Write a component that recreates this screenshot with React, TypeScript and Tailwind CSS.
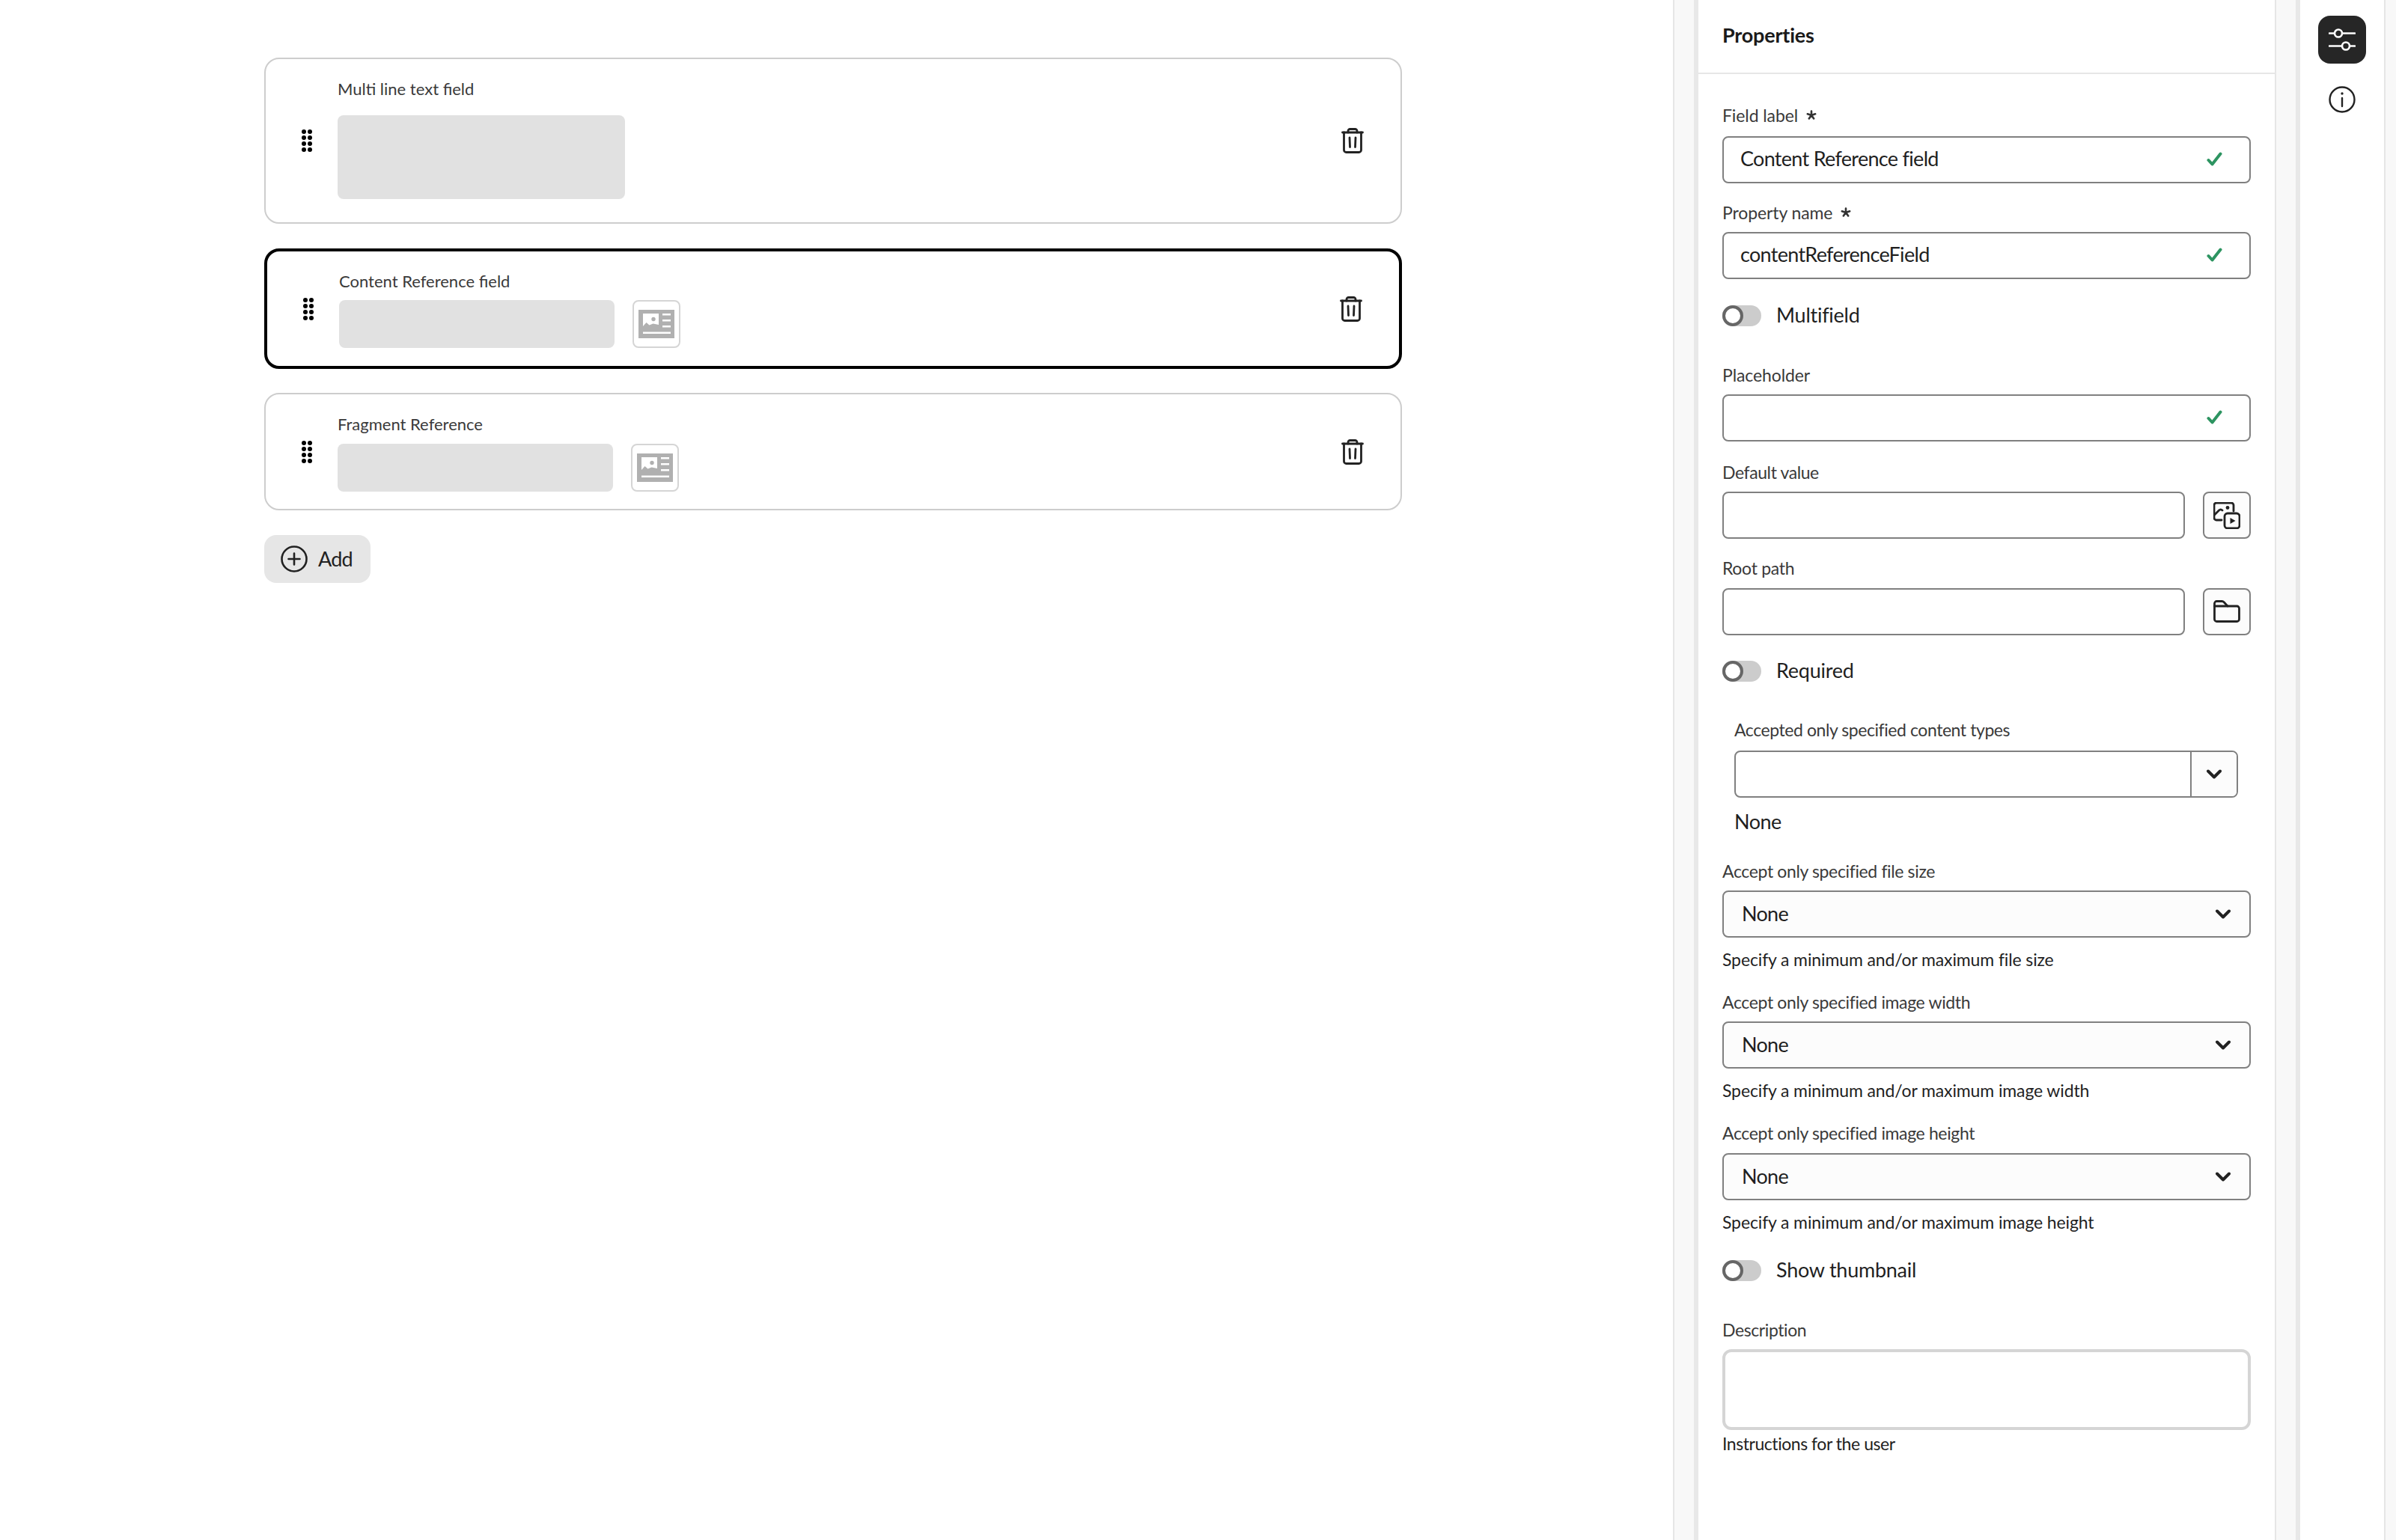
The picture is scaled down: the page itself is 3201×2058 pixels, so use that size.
import type { ReactNode } from "react";

const FONT = "font-['Lato','Noto_Sans',sans-serif]";

function Grip() {
  return (
    <svg width="14" height="30" viewBox="0 0 14 30" className="shrink-0" fill="#000">
      {[3, 11, 19, 27].map((y) => (
        <g key={y}>
          <circle cx="3" cy={y} r="3" />
          <circle cx="11" cy={y} r="3" />
        </g>
      ))}
    </svg>
  );
}

function Trash() {
  return (
    <svg width="30" height="34" viewBox="0 0 30 34" fill="none" stroke="#222" strokeWidth="2.800" strokeLinecap="round" className="shrink-0">
      <path d="M1.500 6h27" />
      <path d="M9 6V4a2.500 2.500 0 0 1 2.500-2.500h7A2.500 2.500 0 0 1 21 4v2" />
      <path d="M3.500 6v23.500a3 3 0 0 0 3 3h17a3 3 0 0 0 3-3V6" />
      <path d="M11 13l.5 12.500M19 13l-.5 12.500" />
    </svg>
  );
}

function RefButton() {
  return (
    <div className="w-[64px] h-[64px] shrink-0 rounded-[8px] border-2 border-[#d5d5d5] bg-white flex items-center justify-center">
      <svg width="48" height="38" viewBox="0 0 48 38">
        <path
          fill="#b0b0b0"
          fillRule="evenodd"
          d="M0 0h48v38H0zM6 5v20h21V5zM32 5v2.600h11V5zM32 13v2.600h11V13zM32 21v2.600h11V21zM6 29.500v2.600h37v-2.600z"
        />
        <circle cx="20" cy="12.500" r="2.700" fill="#b0b0b0" />
        <path d="M6 22l4.500-5 4 3.500 5-2 7.500 1.500V25H6z" fill="#b0b0b0" />
      </svg>
    </div>
  );
}

function Asterisk() {
  return (
    <svg width="14" height="14" viewBox="0 0 14 14" stroke="#333" strokeWidth="2.600" strokeLinecap="round" className="ml-[11px] inline-block">
      <path d="M7 1.500V7M7 7l5.200-1.700M7 7l-5.200-1.700M7 7l3.200 4.500M7 7l-3.200 4.500" />
    </svg>
  );
}

function Check() {
  return (
    <svg width="21" height="19" viewBox="0 0 21 19" fill="none" stroke="#2d9461" strokeWidth="4" strokeLinecap="round" strokeLinejoin="round">
      <path d="M2.500 11l5 5.500L18.500 2.500" />
    </svg>
  );
}

function Chevron() {
  return (
    <svg width="20" height="13" viewBox="0 0 20 13" fill="none" stroke="#222" strokeWidth="4" strokeLinecap="round" strokeLinejoin="round">
      <path d="M2 2.500l8 8 8-8" />
    </svg>
  );
}

function Label({ className, children }: { className: string; children: ReactNode }) {
  return (
    <div className={`h-7 leading-7 pb-[4px] text-[23px] text-[#3a3a3a] flex items-center ${className}`}>
      {children}
    </div>
  );
}

function Input({ value, check, className = "" }: { value?: string; check?: boolean; className?: string }) {
  return (
    <div className={`h-[63px] rounded-[8px] border-2 border-[#808080] bg-white flex items-center justify-between pl-[22px] pb-[3px] pr-[36px] text-[27px] tracking-[-0.7px] text-[#1f1f1f] ${className}`}>
      <span>{value}</span>
      {check && <Check />}
    </div>
  );
}

function Toggle({ label, className }: { label: string; className: string }) {
  return (
    <div className={`flex items-center h-7 ${className}`}>
      <div className="w-[52px] h-7 rounded-full bg-[#cccccc] shrink-0">
        <div className="w-7 h-7 rounded-full border-[4px] border-[#666666] bg-white" />
      </div>
      <span className="ml-[20px] pb-[1px] text-[27px] tracking-[-0.25px] text-[#1f1f1f]">{label}</span>
    </div>
  );
}

function SelectBox() {
  return (
    <div className="h-[63px] rounded-[8px] border-2 border-[#808080] bg-[#fcfcfc] flex items-center justify-between pl-[24px] pr-[25px] text-[27px] tracking-[-0.7px] text-[#1f1f1f]">
      <span>None</span>
      <Chevron />
    </div>
  );
}

function IconBox({ children }: { children: ReactNode }) {
  return (
    <div className="w-[64px] h-[63px] shrink-0 rounded-[8px] border-2 border-[#808080] bg-[#fcfcfc] flex items-center justify-center">
      {children}
    </div>
  );
}

function Help({ className, children }: { className: string; children: ReactNode }) {
  return (
    <div className={`h-7 leading-7 pb-[4px] text-[23px] text-[#1f1f1f] flex items-center ${className}`}>
      {children}
    </div>
  );
}

export default function App() {
  return (
    <div className={`flex w-[3201px] h-[2058px] overflow-hidden bg-white ${FONT}`}>
      {/* canvas */}
      <main className="w-[2235px] shrink-0 pl-[353px] pt-[77px]">
        <div className="w-[1520px]">
          <div className="h-[222px] rounded-[20px] border-2 border-[#cdcdcd] flex items-center pl-[48px] pr-[49px]">
            <Grip />
            <div className="ml-[34px] flex-1">
              <div className="h-[18px] leading-[18px] mb-[26px] text-[22px] text-[#3a3a3a]">Multi line text field</div>
              <div className="w-[384px] h-[112px] rounded-[8px] bg-[#e1e1e1]" />
            </div>
            <Trash />
          </div>

          <div className="mt-[33px] h-[161px] rounded-[20px] border-4 border-black flex items-center pl-[48px] pr-[49px]">
            <Grip />
            <div className="ml-[34px] flex-1">
              <div className="h-8 leading-8 mb-[9px] text-[22px] text-[#3a3a3a]">Content Reference field</div>
              <div className="flex gap-6">
                <div className="w-[368px] h-[64px] rounded-[8px] bg-[#e1e1e1]" />
                <RefButton />
              </div>
            </div>
            <Trash />
          </div>

          <div className="mt-[32px] h-[157px] rounded-[20px] border-2 border-[#cdcdcd] flex items-center pl-[48px] pr-[49px]">
            <Grip />
            <div className="ml-[34px] flex-1">
              <div className="h-[34px] leading-[34px] mb-[9px] text-[22px] text-[#3a3a3a]">Fragment Reference</div>
              <div className="flex gap-6">
                <div className="w-[368px] h-[64px] rounded-[8px] bg-[#e1e1e1]" />
                <RefButton />
              </div>
            </div>
            <Trash />
          </div>

          <button className="mt-[33px] w-[142px] h-[64px] rounded-[16px] bg-[#e6e6e6] flex items-center pl-[22px] text-[27px] tracking-[-0.8px] text-[#222]">
            <svg width="36" height="36" viewBox="0 0 36 36" fill="none" stroke="#222" strokeWidth="2.600" strokeLinecap="round">
              <circle cx="18" cy="18" r="16.500" />
              <path d="M18 10.500v15M10.500 18h15" />
            </svg>
            <span className="ml-[14px]">Add</span>
          </button>
        </div>
      </main>

      <div className="w-[34px] shrink-0 bg-[#f8f8f8] border-l-2 border-r-[6px] border-l-[#e6e6e6] border-r-[#e8e8e8]" />

      {/* properties panel */}
      <aside className="w-[770px] shrink-0">
        <div className="h-[99px] border-b-2 border-[#e6e6e6] pl-[32px] pt-[29px]">
          <h2 className="h-9 leading-9 text-[27px] tracking-[-0.2px] font-bold text-[#1a1a1a]">Properties</h2>
        </div>
        <div className="pl-[32px] pr-[32px]">
          <Label className="mt-[43px] mb-[12px] tracking-[-0.1px]">Field label<Asterisk /></Label>
          <Input value="Content Reference field" check />

          <Label className="mt-[27px] mb-[10px] tracking-[-0.1px]">Property name<Asterisk /></Label>
          <Input value="contentReferenceField" check />

          <Toggle label="Multifield" className="mt-[35px]" />

          <Label className="mt-[53px] mb-[10px] tracking-[-0.1px]">Placeholder</Label>
          <Input check />

          <Label className="mt-[29px] mb-[10px] tracking-[-0.4px]">Default value</Label>
          <div className="flex gap-6">
            <Input className="flex-1" />
            <IconBox>
              <svg width="36" height="36" viewBox="0 0 36 36" fill="none" stroke="#222" strokeWidth="2.800" strokeLinecap="round" strokeLinejoin="round">
                <path d="M11 24H4a3 3 0 0 1-3-3V4a3 3 0 0 1 3-3h20a3 3 0 0 1 3 3v8" />
                <path d="M1.500 17l6-6c1.500-1.500 3-1.500 4.500 0" />
                <rect x="15" y="15" width="20" height="20" rx="4" />
                <circle cx="19" cy="7.500" r="2.400" fill="#222" stroke="none" />
                <path d="M22.500 21l7 4-7 4z" fill="#222" stroke="none" />
              </svg>
            </IconBox>
          </div>

          <Label className="mt-[27px] mb-[11px] tracking-[-0.3px]">Root path</Label>
          <div className="flex gap-6">
            <Input className="flex-1" />
            <IconBox>
              <svg width="36" height="30" viewBox="0 0 36 30" fill="none" stroke="#222" strokeWidth="2.800" strokeLinecap="round" strokeLinejoin="round" className="mb-[2px]">
                <path d="M1.500 8V4.500a3 3 0 0 1 3-3h7c1 0 2 .5 2.700 1.200L19 8h12.500a3 3 0 0 1 3 3v14.500a3 3 0 0 1-3 3h-27a3 3 0 0 1-3-3z" />
                <path d="M1.500 8H19" />
              </svg>
            </IconBox>
          </div>

          <Toggle label="Required" className="mt-[34px]" />

          <div className="pl-[16px] pr-[17px]">
            <Label className="mt-[52px] mb-[12px] tracking-[-0.43px]">Accepted only specified content types</Label>
            <div className="h-[63px] rounded-[8px] border-2 border-[#808080] bg-white flex">
              <div className="flex-1" />
              <div className="w-[62px] border-l-2 border-[#808080] flex items-center justify-center rounded-r-[6px] bg-[#fcfcfc]">
                <Chevron />
              </div>
            </div>
            <div className="mt-[14px] h-9 leading-9 text-[27px] tracking-[-0.5px] text-[#1f1f1f]">None</div>
          </div>

          <Label className="mt-[36px] mb-[10px] tracking-[-0.36px]">Accept only specified file size</Label>
          <SelectBox />
          <Help className="mt-[17px] tracking-[-0.12px]">Specify a minimum and/or maximum file size</Help>

          <Label className="mt-[29px] mb-[10px] tracking-[-0.36px]">Accept only specified image width</Label>
          <SelectBox />
          <Help className="mt-[17px] tracking-[-0.12px]">Specify a minimum and/or maximum image width</Help>

          <Label className="mt-[29px] mb-[11px] tracking-[-0.36px]">Accept only specified image height</Label>
          <SelectBox />
          <Help className="mt-[17px] tracking-[-0.12px]">Specify a minimum and/or maximum image height</Help>

          <Toggle label="Show thumbnail" className="mt-[35px]" />

          <Label className="mt-[53px] mb-[10px] tracking-[-0.4px]">Description</Label>
          <div className="h-[108px] rounded-[12px] border-4 border-[#d5d5d5] bg-white" />
          <Help className="mt-[6px] tracking-[-0.45px]">Instructions for the user</Help>
        </div>
      </aside>

      <div className="w-[34px] shrink-0 bg-[#f8f8f8] border-l-2 border-r-[6px] border-l-[#e6e6e6] border-r-[#e8e8e8]" />

      {/* right rail */}
      <nav className="w-[112px] shrink-0 flex flex-col items-center pt-[21px]">
        <div className="w-16 h-16 rounded-[16px] bg-[#262626] flex items-center justify-center">
          <svg width="36" height="30" viewBox="0 0 36 30" fill="#262626" stroke="#fff" strokeWidth="2.600" strokeLinecap="round">
            <path d="M1 6.500h34M1 23.500h34" />
            <circle cx="13" cy="6.500" r="5" />
            <circle cx="23" cy="23.500" r="5" />
          </svg>
        </div>
        <svg width="36" height="36" viewBox="0 0 36 36" fill="none" stroke="#222" strokeWidth="2.400" strokeLinecap="round" className="mt-[30px]">
          <circle cx="18" cy="18" r="16.500" />
          <path d="M18 16v11" />
          <circle cx="18" cy="10" r="1.700" fill="#222" stroke="none" />
        </svg>
      </nav>

      <div className="flex-1 bg-[#f8f8f8] border-l-2 border-[#e6e6e6]" />
    </div>
  );
}
